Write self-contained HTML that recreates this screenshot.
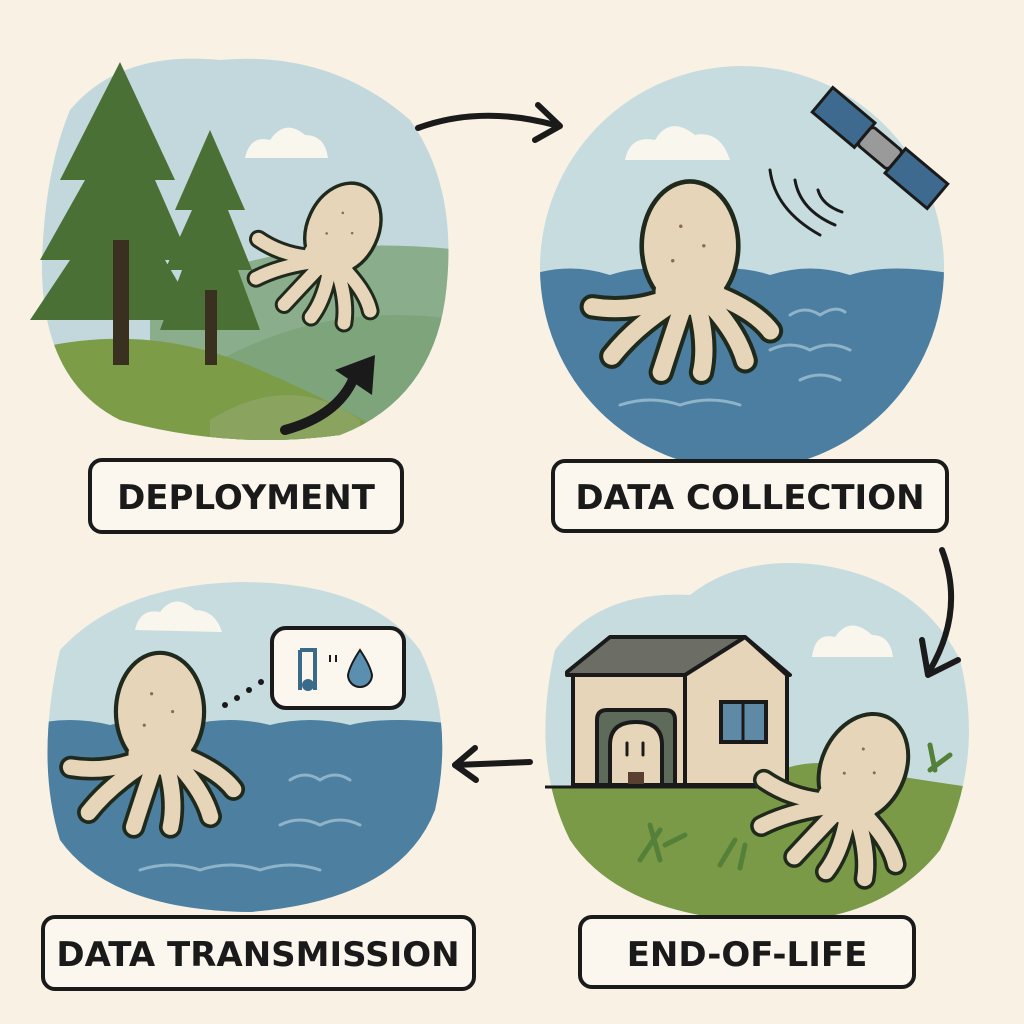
<!DOCTYPE html>
<html><head><meta charset="utf-8"><style>
html,body{margin:0;padding:0;background:#f8f1e4;}
svg{display:block}
text{font-family:"DejaVu Sans","Liberation Sans",sans-serif;font-weight:bold;fill:#1a1a1a}
</style></head><body>
<svg width="1024" height="1024" viewBox="0 0 1024 1024" xmlns="http://www.w3.org/2000/svg">
<defs>
<clipPath id="c1"><path d="M70 110 Q120 50 220 60 Q330 50 410 120 Q460 190 445 300 Q430 400 340 435 Q230 450 120 420 Q40 380 42 260 Q45 170 70 110Z"/></clipPath>
<clipPath id="c2"><circle cx="742" cy="268" r="202"/></clipPath>
<clipPath id="c3"><path d="M60 650 Q120 585 240 582 Q370 582 420 650 Q455 720 435 810 Q400 900 250 912 Q110 910 60 840 Q35 760 60 650Z"/></clipPath>
<clipPath id="c4"><path d="M555 650 Q600 590 690 595 Q740 555 820 565 Q920 580 960 660 Q985 760 940 850 Q880 925 760 922 Q620 915 570 840 Q530 760 555 650Z"/></clipPath>
<g id="octo">
 <g fill="none" stroke="#1f2a1c" stroke-width="22" stroke-linecap="round">
  <path d="M-25 40 Q-55 50 -85 45"/><path d="M-20 45 Q-50 65 -68 88"/><path d="M-8 50 Q-18 80 -25 102"/><path d="M8 50 Q15 80 10 102"/><path d="M20 45 Q42 70 48 92"/><path d="M28 37 Q58 50 70 66"/>
 </g>
 <ellipse cx="0" cy="-8" rx="42" ry="56" fill="#e6d5b8" stroke="#1f2a1c" stroke-width="4"/>
 <g fill="none" stroke="#e6d5b8" stroke-width="15" stroke-linecap="round">
  <path d="M-25 40 Q-55 50 -85 45"/><path d="M-20 45 Q-50 65 -68 88"/><path d="M-8 50 Q-18 80 -25 102"/><path d="M8 50 Q15 80 10 102"/><path d="M20 45 Q42 70 48 92"/><path d="M28 37 Q58 50 70 66"/>
 </g>
 <ellipse cx="0" cy="32" rx="30" ry="20" fill="#e6d5b8"/>
 <circle cx="-8" cy="-25" r="1.5" fill="#8a6a50"/><circle cx="12" cy="-8" r="1.5" fill="#8a6a50"/><circle cx="-15" cy="5" r="1.5" fill="#8a6a50"/>
</g>
</defs>

<!-- Panel 1 -->
<g clip-path="url(#c1)">
 <rect x="0" y="0" width="500" height="500" fill="#c3d8dc"/>
 <path d="M245 158 Q250 135 270 140 Q285 118 305 135 Q325 135 328 158Z" fill="#f9f6ee"/>
 <path d="M150 300 Q280 230 460 250 L460 460 L150 460Z" fill="#8aad8c"/>
 <path d="M220 360 Q330 300 460 320 L460 460 L220 460Z" fill="#7ea47c"/>
 <path d="M30 350 Q150 320 260 370 Q330 400 380 430 L380 460 L30 460Z" fill="#7c9c48"/>
 <path d="M210 420 Q290 370 360 420 L360 460 L210 460Z" fill="#8aa460"/>
</g>
<path d="M120 62 L60 180 L85 180 L40 260 L70 260 L30 320 L200 320 L165 260 L190 260 L155 180 L175 180Z" fill="#4a7036"/>
<rect x="113" y="240" width="16" height="125" fill="#3a3020"/>
<path d="M210 130 L175 210 L192 210 L165 270 L182 270 L160 330 L260 330 L238 270 L252 270 L228 210 L245 210Z" fill="#4a7036"/>
<rect x="205" y="290" width="12" height="75" fill="#3a3020"/>
<path d="M285 430 Q340 415 355 375" fill="none" stroke="#1a1a1a" stroke-width="10" stroke-linecap="round"/>
<path d="M335 370 L375 355 L372 395Z" fill="#1a1a1a"/>
<use href="#octo" transform="translate(340 235) rotate(25) scale(0.85)"/>
<path d="M418 128 Q480 105 555 125" fill="none" stroke="#1a1a1a" stroke-width="6" stroke-linecap="round"/>
<path d="M538 105 L560 126 L535 140" fill="none" stroke="#1a1a1a" stroke-width="6" stroke-linecap="round" stroke-linejoin="round"/>
<rect x="90" y="460" width="312" height="72" rx="12" fill="#fbf7ee" stroke="#1a1a1a" stroke-width="4"/>
<text x="246" y="509" font-size="34" text-anchor="middle">DEPLOYMENT</text>

<!-- Panel 2 -->
<g clip-path="url(#c2)">
 <rect x="530" y="60" width="430" height="430" fill="#c6dcdf"/>
 <path d="M625 160 Q630 135 655 140 Q670 115 695 135 Q720 130 730 160Z" fill="#f9f6ee"/>
 <path d="M530 275 Q570 262 610 275 Q650 262 690 275 Q730 262 770 275 Q810 262 850 275 Q890 262 960 275 L960 490 L530 490Z" fill="#4b7ea0"/>
 <g fill="none" stroke="#8fb3c9" stroke-width="3" stroke-linecap="round">
  <path d="M790 315 Q805 305 820 315 Q835 305 845 312"/><path d="M770 350 Q790 340 810 350 Q830 340 850 350"/><path d="M620 405 Q650 395 680 405 Q710 395 740 405"/><path d="M800 380 Q820 370 840 380"/>
 </g>
</g>
<use href="#octo" transform="translate(690 255) scale(1.15)"/>
<g transform="translate(880 148) rotate(40)">
 <rect x="-75" y="-16" width="55" height="32" fill="#3e6a8f" stroke="#1a1a1a" stroke-width="3"/>
 <rect x="20" y="-16" width="55" height="32" fill="#3e6a8f" stroke="#1a1a1a" stroke-width="3"/>
 <rect x="-20" y="-12" width="40" height="24" rx="4" fill="#9a9a9a" stroke="#1a1a1a" stroke-width="3"/>
</g>
<g fill="none" stroke="#1a1a1a" stroke-width="3" stroke-linecap="round">
 <path d="M770 170 Q775 210 820 235"/><path d="M795 180 Q800 210 835 225"/><path d="M818 190 Q822 205 842 212"/>
</g>
<rect x="553" y="461" width="394" height="70" rx="12" fill="#fbf7ee" stroke="#1a1a1a" stroke-width="4"/>
<text x="750" y="509" font-size="34" text-anchor="middle">DATA COLLECTION</text>

<!-- Panel 3 -->
<g clip-path="url(#c3)">
 <rect x="0" y="560" width="480" height="370" fill="#c6dcdf"/>
 <path d="M135 630 Q140 608 160 612 Q175 592 195 610 Q215 610 222 632Z" fill="#f9f6ee"/>
 <path d="M30 725 Q70 715 110 725 Q150 715 190 725 Q230 715 270 725 Q310 715 350 725 Q390 715 460 725 L460 930 L30 930Z" fill="#4d7fa0"/>
 <g fill="none" stroke="#8fb3c9" stroke-width="3" stroke-linecap="round">
  <path d="M290 780 Q305 770 320 780 Q335 770 350 780"/><path d="M280 825 Q300 815 320 825 Q340 815 360 825"/><path d="M140 870 Q170 860 200 870 Q230 860 260 870 Q290 860 320 870"/>
 </g>
</g>
<use href="#octo" transform="translate(160 720) scale(1.05)"/>
<g fill="#1a1a1a"><circle cx="225" cy="705" r="3"/><circle cx="237" cy="698" r="3"/><circle cx="249" cy="690" r="3"/><circle cx="261" cy="682" r="3"/></g>
<rect x="272" y="628" width="132" height="80" rx="14" fill="#fbf7ee" stroke="#1a1a1a" stroke-width="4"/>
<path d="M300 650 L300 690 M300 650 L315 650 L315 690" fill="none" stroke="#3a6a8a" stroke-width="4"/>
<circle cx="308" cy="685" r="6" fill="#3a6a8a"/>
<path d="M330 655 L330 662 M336 655 L336 662" stroke="#1a1a1a" stroke-width="2"/>
<path d="M360 650 Q370 665 372 675 A12 12 0 1 1 348 675 Q350 665 360 650Z" fill="#5a8fb0" stroke="#1a1a1a" stroke-width="2"/>
<path d="M530 762 L455 765" fill="none" stroke="#1a1a1a" stroke-width="6" stroke-linecap="round"/>
<path d="M475 748 L455 765 L476 780" fill="none" stroke="#1a1a1a" stroke-width="6" stroke-linecap="round" stroke-linejoin="round"/>
<rect x="43" y="917" width="431" height="72" rx="12" fill="#fbf7ee" stroke="#1a1a1a" stroke-width="4"/>
<text x="258" y="966" font-size="34" text-anchor="middle">DATA TRANSMISSION</text>

<!-- Panel 4 -->
<g clip-path="url(#c4)">
 <rect x="530" y="550" width="460" height="390" fill="#c6dcdf"/>
 <path d="M812 657 Q815 632 835 637 Q850 615 872 635 Q890 635 893 657Z" fill="#f9f6ee"/>
 <path d="M530 787 L750 787 Q800 750 860 770 Q920 780 990 790 L990 940 L530 940Z" fill="#7a9a48"/>
 <g fill="none" stroke="#55803a" stroke-width="5" stroke-linecap="round">
  <path d="M640 860 L660 830 M660 860 L650 825 M665 845 L685 835"/><path d="M720 865 L735 840 M740 868 L745 845"/><path d="M935 770 L930 745 M930 770 L950 755"/>
 </g>
</g>
<path d="M567 672 L610 637 L745 637 L790 675 L567 675Z" fill="#6c6e66" stroke="#1a1a1a" stroke-width="4" stroke-linejoin="round"/>
<rect x="573" y="675" width="112" height="110" fill="#e6d5b8" stroke="#1a1a1a" stroke-width="4"/>
<path d="M685 675 L745 637 L787 675 L787 785 L685 785Z" fill="#e6d5b8" stroke="#1a1a1a" stroke-width="4" stroke-linejoin="round"/>
<rect x="721" y="702" width="45" height="40" fill="#5f8aa6" stroke="#1a1a1a" stroke-width="4"/>
<line x1="743" y1="702" x2="743" y2="742" stroke="#1a1a1a" stroke-width="3"/>
<path d="M597 785 L597 720 Q597 710 607 710 L665 710 Q675 710 675 720 L675 785Z" fill="#5e6b5a" stroke="#1a1a1a" stroke-width="4"/>
<path d="M610 785 L610 745 Q610 722 636 722 Q662 722 662 745 L662 785Z" fill="#e6d5b8" stroke="#1a1a1a" stroke-width="4"/>
<path d="M627 743 L627 755 M643 743 L643 755" stroke="#1a1a1a" stroke-width="3" stroke-linecap="round"/>
<rect x="628" y="772" width="16" height="12" fill="#5a4030"/>
<line x1="545" y1="787" x2="760" y2="787" stroke="#1a1a1a" stroke-width="3"/>
<use href="#octo" transform="translate(860 775) rotate(25) scale(1.0)"/>
<path d="M942 550 Q965 610 930 670" fill="none" stroke="#1a1a1a" stroke-width="6" stroke-linecap="round"/>
<path d="M922 640 L928 675 L958 660" fill="none" stroke="#1a1a1a" stroke-width="6" stroke-linecap="round" stroke-linejoin="round"/>
<rect x="580" y="917" width="334" height="70" rx="12" fill="#fbf7ee" stroke="#1a1a1a" stroke-width="4"/>
<text x="747" y="966" font-size="34" text-anchor="middle">END-OF-LIFE</text>
</svg>
</body></html>
